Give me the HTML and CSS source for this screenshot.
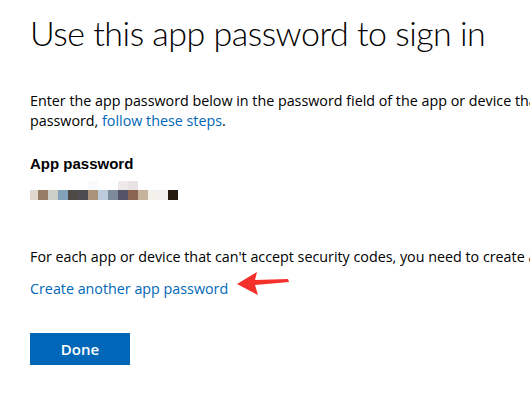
FILE: index.html
```html
<!DOCTYPE html>
<html lang="en">
<head>
    <meta charset="UTF-8">
    <meta name="viewport" content="width=device-width, initial-scale=1.0">
    <title>App password</title>
    <link rel="stylesheet" href="styles.css">
</head>
<body>
    <div class="page">
        <h1>Use this app password to sign in</h1>

        <p class="intro">Enter the app password below in the password field of the app or device that requires it. If you need help entering the<br>password, <a href="#">follow these steps</a>.</p>

        <div class="password-block">
            <h2>App password</h2>
            <!-- blurred password, drawn as pixel blocks -->
            <div class="pixels">
                <div class="pixel-row top">
                    <span class="first"></span><span></span><span></span><span></span><span></span><span></span>
                    <span style="background:#f8fafc"></span>
                    <span></span><span></span>
                    <span style="background:#efeaea"></span>
                    <span style="background:#e8e4e5"></span>
                </div>
                <div class="pixel-row">
                    <span class="first" style="background:#e0d8cf"></span>
                    <span style="background:#967c62"></span>
                    <span style="background:#cdd0c8"></span>
                    <span style="background:#81a2b8"></span>
                    <span style="background:#4d4a46"></span>
                    <span style="background:#4d4c50"></span>
                    <span style="background:#a99479"></span>
                    <span style="background:#bccbdb"></span>
                    <span style="background:#7c8a9a"></span>
                    <span style="background:#55536a"></span>
                    <span style="background:#8b6452"></span>
                    <span style="background:#c5b39e"></span>
                    <span style="background:#f4f0ec"></span>
                    <span style="background:#f0f0f0"></span>
                    <span style="background:#241a10"></span>
                </div>
            </div>
        </div>

        <p class="note">For each app or device that can't accept security codes, you need to create a new app password.</p>

        <div class="link-row">
            <a href="#">Create another app password</a>
            <svg class="arrow" width="60" height="30" viewBox="0 0 60 30">
                <path d="M3 15 L23 3 L21 11 L54 10 L55 13 L21 16 L24 26 Z" fill="#f5302b"/>
            </svg>
        </div>

        <button class="done-btn">Done</button>
    </div>
</body>
</html>
```

FILE: styles.css
```css
body {
    margin: 0;
    background-color: #fff;
    color: #000;
    overflow: hidden;
}
.page {
    width: 900px;
    padding: 11px 0 0 30px;
    font-family: "Open Sans", "Noto Sans", sans-serif;
    font-size: 14.3px;
}
h1 {
    font-family: "Lato", "Liberation Sans", sans-serif;
    font-weight: 300;
    font-size: 34px;
    letter-spacing: -0.5px;
    line-height: 44px;
    margin: 0 0 36px 0;
    color: #000;
}
.intro {
    line-height: 20px;
    margin: 0 0 23px 0;
}
a {
    color: #0067b8;
    text-decoration: none;
}
h2 {
    font-family: "Liberation Sans", Arial, sans-serif;
    font-weight: bold;
    font-size: 15px;
    line-height: 20px;
    margin: 0 0 7px 0;
}
.pixel-row {
    display: flex;
    height: 9px;
}
.pixel-row + .pixel-row {
    height: 10px;
}
.pixel-row span {
    display: block;
    width: 10px;
    flex: none;
}
.pixel-row .first {
    width: 8px;
}
.note {
    margin: 47px 0 12px 0;
    line-height: 20px;
}
.link-row {
    position: relative;
    line-height: 20px;
}
.arrow {
    position: absolute;
    left: 204px;
    top: -10px;
}
.done-btn {
    display: block;
    margin-top: 34px;
    width: 100px;
    height: 32px;
    border: none;
    background-color: #0067b8;
    color: #fff;
    font-family: "Open Sans", "Noto Sans", sans-serif;
    font-weight: 600;
    font-size: 15px;
    cursor: pointer;
    padding: 0;
}
```
